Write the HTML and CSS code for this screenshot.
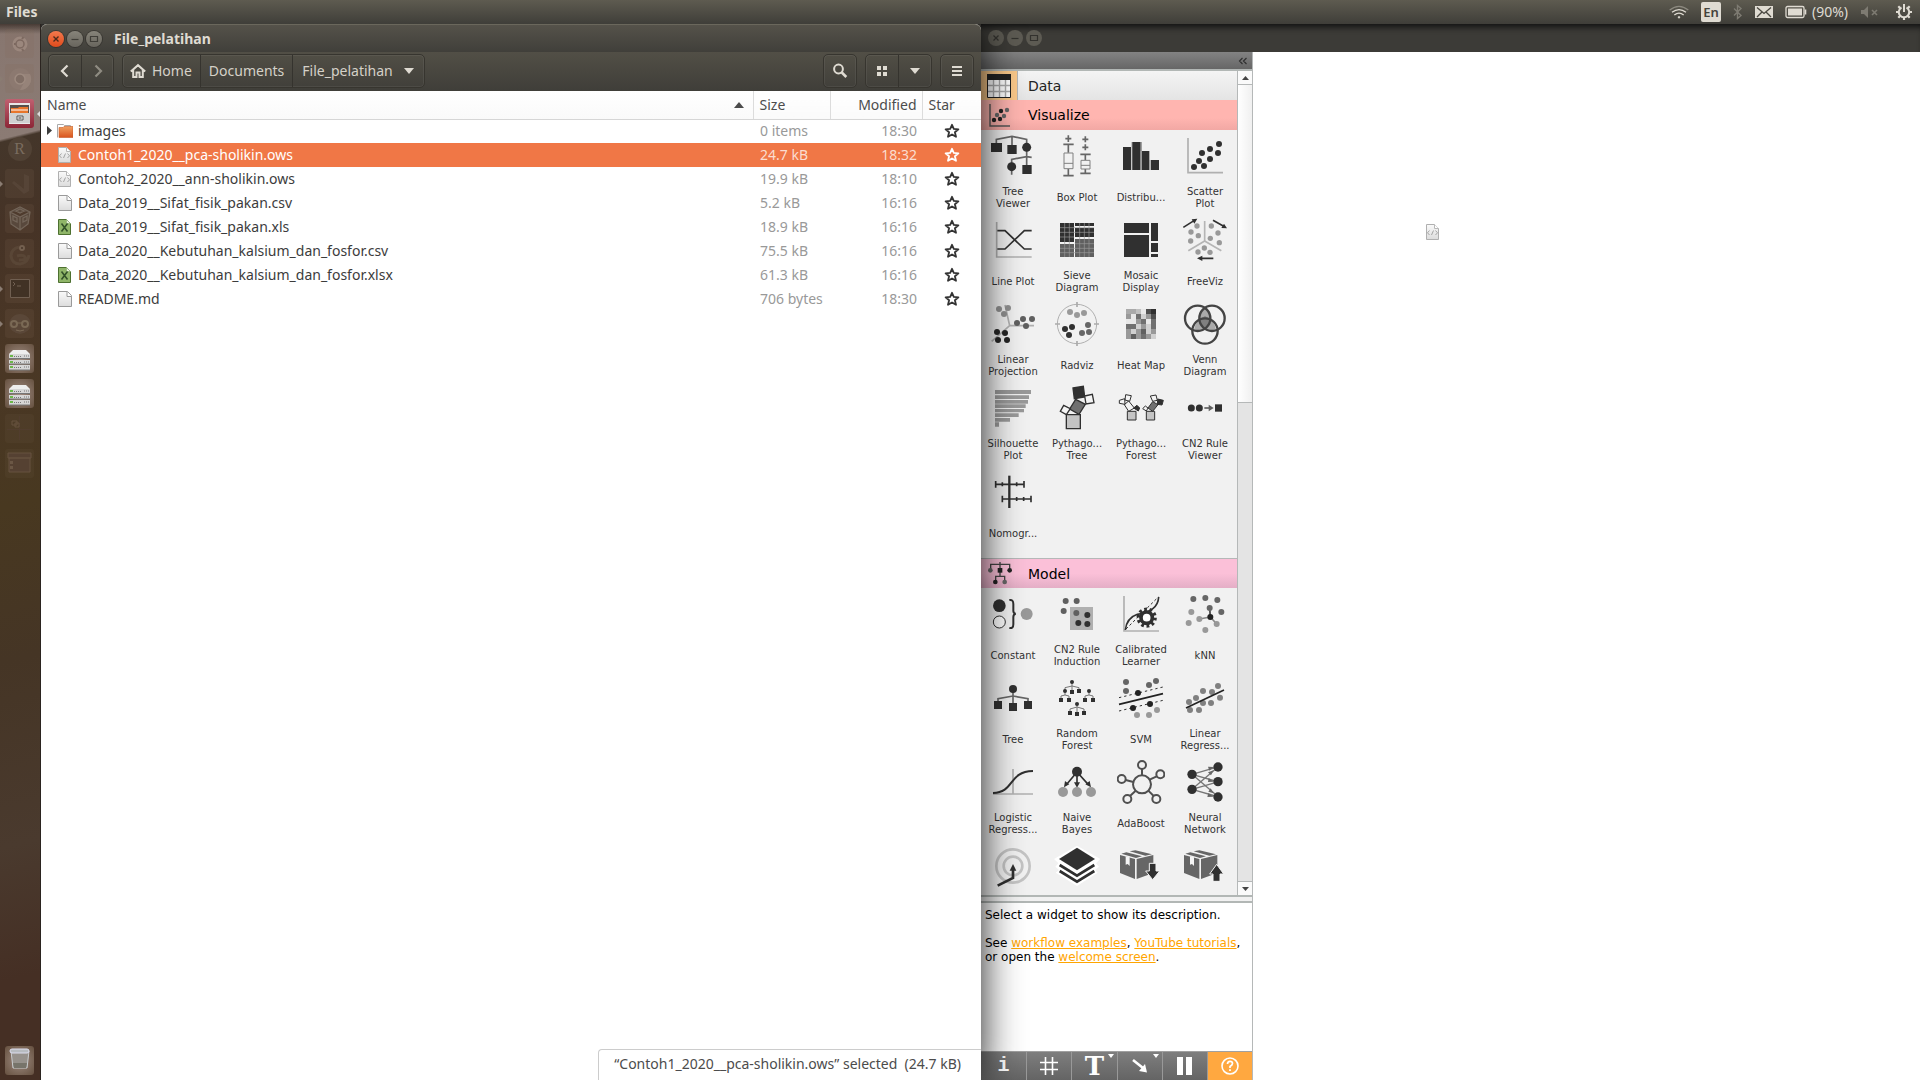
FILE: index.html
```html
<!DOCTYPE html>
<html lang="en">
<head>
<meta charset="utf-8">
<title>File_pelatihan</title>
<link rel="stylesheet" href="styles.css">
</head>
<body>
<svg class="defs" width="0" height="0" aria-hidden="true">
  <linearGradient id="paper" x1="0" y1="0" x2="0" y2="1"><stop offset="0" stop-color="#fafafa"/><stop offset="1" stop-color="#dcdcdc"/></linearGradient>
  <linearGradient id="orange" x1="0" y1="0" x2="0" y2="1"><stop offset="0" stop-color="#f0a060"/><stop offset="1" stop-color="#d9541e"/></linearGradient>
  <symbol id="star" viewBox="0 0 16 16"><path d="M8 1.8l1.8 4.1 4.6.4-3.5 3 1.1 4.5L8 11.4l-4 2.4 1.1-4.5-3.5-3 4.6-.4z" fill="none" stroke="currentColor" stroke-width="1.8" stroke-linejoin="round"/></symbol>
  <symbol id="doc" viewBox="0 0 16 16"><path d="M1.5.5h9l4 4v11h-13z" fill="url(#paper)" stroke="#9a9a9a"/><path d="M10 .5v5h4.5" fill="#fff" stroke="#9a9a9a"/></symbol>
  <symbol id="code" viewBox="0 0 16 16"><path d="M1.5.5h8l4 4v11h-12z" fill="url(#paper)" stroke="#b0b0b0"/><path d="M9.5.5v4h4" fill="#fff" stroke="#b8b8b8"/><path d="M4.500 6.500L2.500 8.800l2 2.200M10.500 6.500l2 2.300-2 2.200M8.500 6.500l-2 4.500" fill="none" stroke="#a4a4a4"/></symbol>
  <symbol id="sheet" viewBox="0 0 16 16"><path d="M1.5.5h8l4 4v11h-12z" fill="#8fb568" stroke="#4d7030"/><path d="M9.5.5v4h4" fill="#e8f2dc" stroke="#9dbb80"/><path d="M4.5 4.5l6 8M10.5 4.5l-6 8" stroke="#33522a" stroke-width="1.6"/></symbol>
  <symbol id="folder" viewBox="0 0 16 16"><path d="M.5 14.5V1.5h6l1 1h6v3" fill="#fff" stroke="#aaa"/><path d="M2 4.5h4l1-1h9v11H2z" fill="url(#orange)" stroke="#c65a28" stroke-width=".6"/></symbol>
  <symbol id="server" viewBox="0 0 29 29"><path d="M8 6h13l4 4H4z" fill="#eee"/><path d="M4 10h21v5H4zM4 16h21v4H4zM4 21h21v5H4z" fill="#d6d6d6"/><path d="M4 14.5h21M4 20h21M4 26h21" stroke="#777"/><path d="M5 12h3M5 18h3M5 23h3" stroke="#6cb84a" stroke-width="2"/><path d="M9 12.5h7M9 18.5h7M9 23.5h7M19 12h5M19 18h5M19 23h5" stroke="#777" stroke-dasharray="1 1"/></symbol>
</svg>

<header class="panel">
  <span class="panel-app">Files</span>
  <div class="tray">
    <svg width="20" height="16" viewBox="87 12 60 48" fill="none" stroke="#dfdbd2" stroke-width="4"><path d="M89 30q28-22 56 0" stroke="#8c897f"/><path d="M96 37q21-16 42 0M103 45q14-11 28 0"/><circle cx="117" cy="52" r="3" fill="#dfdbd2" stroke-width="1"/></svg>
    <span class="lang">En</span>
    <svg width="10" height="16" viewBox="0 0 10 16" fill="none" stroke="#7e7b72" stroke-width="1.4"><path d="M1 4.5l7 7-3.5 3V1.5L8 4.5l-7 7"/></svg>
    <svg width="18" height="14" viewBox="0 0 18 14"><path d="M0 1h18v12H0z" fill="#dfdbd2"/><path d="M2 2.5l7 6 7-6M2 12l5-5M16 12l-5-5" fill="none" stroke="#48463f" stroke-width="1.3"/></svg>
    <span class="battery"><svg width="22" height="14" viewBox="0 0 22 14"><rect x="1" y="1.5" width="18" height="11" rx="1.5" fill="none" stroke="#dfdbd2" stroke-width="1.3"/><path d="M3 3.5h14v7H3z" fill="#dfdbd2"/><path d="M20.5 4.5v5" stroke="#dfdbd2" stroke-width="1.6"/></svg><span>(90%)</span></span>
    <svg width="24" height="14" viewBox="0 0 24 14"><path d="M1 5h3l4-4v12L4 9H1z" fill="#7e7b72"/><path d="M12 5l5 5M17 5l-5 5" stroke="#7e7b72" stroke-width="1.6"/></svg>
    <svg width="16" height="16" viewBox="0 0 16 16" fill="none" stroke="#dfdbd2"><path d="M5.5 3.5a5.2 5.2 0 1 0 5 0" stroke-width="2"/><path d="M8 0v8" stroke-width="2"/><path d="M8 13.5V16M2.5 8H0M13.5 8H16M4 12l-1.7 1.7M12 12l1.7 1.7M4 4L2.3 2.3M12 4l1.7-1.7" stroke-width="2.2"/></svg>
  </div>
</header>

<main class="desktop">
  <nav class="launcher" aria-label="Launcher">
    <button class="tile dim" aria-label="Search"><svg viewBox="0 0 29 29" fill="none" stroke="#b09a90"><circle cx="15" cy="15" r="7.5" fill="#a08c82" stroke="none"/><circle cx="15" cy="15" r="4" stroke="#7b675e" stroke-width="1.5"/><path d="M9 15h2M17 10l1.5-2M17 20l1.5 2" stroke="#7b675e" stroke-width="2"/></svg></button>
    <button class="tile dim run" aria-label="Chrome"><svg viewBox="0 0 29 29"><circle cx="15" cy="15" r="11" fill="#8d7a71"/><path d="M15 10h10a11 11 0 0 1-10 16l5-9z" fill="#9a877d"/><circle cx="15" cy="15" r="5" fill="#7f6d64" stroke="#a39085" stroke-width="1.5"/></svg></button>
    <button class="tile active run" aria-label="Files"><svg viewBox="0 0 29 29"><path d="M4 4h21v21H4z" fill="#e8e8e8"/><path d="M5 6h19v8H5z" fill="#58504c"/><path d="M6 9h7l1-1h9v6H6z" fill="#e8762c"/><path d="M6 11h17" stroke="#fff"/><path d="M4 14h21v10H4z" fill="#d0d0d0"/><path d="M12 17h6v4h-6z" fill="#eee" stroke="#555"/><path d="M13.5 19h3" stroke="#333"/></svg></button>
    <button class="tile bare dim" aria-label="R"><span class="r-badge">R</span></button>
    <button class="tile dim run" aria-label="Code"><svg viewBox="0 0 29 29"><path d="M19 5l5 2v15l-5 3L7 14l2-2 10 8z" fill="#59473a"/></svg></button>
    <button class="tile dim" aria-label="VirtualBox"><svg viewBox="0 0 29 29" fill="#5b4c40" stroke="#7d7064" stroke-width="1.3"><path d="M5 8l10-5 10 5-2 12-8 6-9-6zM5 8l10 5 10-5M15 13v13M8 12l4 2v4l-4-2zM18 14l4-2v4l-4 2zM11 7l4-2 4 2-4 2z"/></svg></button>
    <button class="tile dim" aria-label="Gecko"><svg viewBox="0 0 29 29"><path d="M14 8q-8 2-8 9 1 8 9 8 8-1 9-9M12 17q6-2 8 1t-6 3" fill="none" stroke="#5c4939" stroke-width="3"/><circle cx="17" cy="9" r="3" fill="#7c6958"/><circle cx="17" cy="9" r="1" fill="#443326"/></svg></button>
    <button class="tile dim run" aria-label="Terminal"><svg viewBox="0 0 29 29" fill="none" stroke="#78685a"><path d="M5.5 5.5h19v18h-19z" fill="#3e3024"/><path d="M8 8l2 2-2 2M12 12h4"/></svg></button>
    <button class="tile dim run" aria-label="Orange"><svg viewBox="0 0 29 29"><path d="M4 16a11 11 0 0 1 22 0q-2 8-11 9Q6 24 4 16z" fill="#5d4a3b"/><circle cx="9" cy="15" r="3" fill="none" stroke="#85745f" stroke-width="2"/><circle cx="20" cy="15" r="3" fill="none" stroke="#85745f" stroke-width="2"/><path d="M11 21q4 2 8 0M12 14h5" stroke="#85745f" fill="none"/></svg></button>
    <button class="tile lit" aria-label="Server 1"><svg viewBox="0 0 29 29"><use href="#server"/></svg></button>
    <button class="tile lit" aria-label="Server 2"><svg viewBox="0 0 29 29"><use href="#server"/></svg></button>
    <button class="tile faint" aria-label="Workspaces"><svg viewBox="0 0 29 29" fill="none" stroke="#67523f"><path d="M14.5 2v24M2 15.5h24" stroke="#513d2e"/><path d="M7 7h5v4H7zM10 9h4v4h-4z"/></svg></button>
    <button class="tile faint" aria-label="Archive"><svg viewBox="0 0 29 29"><path d="M3 4h23v5H3zM4 9h21v14H4z" fill="#554132" stroke="#67523f"/><path d="M5 12h3v3H5zM5 17h3v3H5z" fill="#6b5745"/></svg></button>
    <button class="tile lit trash" aria-label="Trash"><svg viewBox="0 0 29 29"><path d="M6 5h18l-2 17H8z" fill="#97928c" stroke="#c8ccce"/><path d="M8 17h14l-1 5H9z" fill="#77746a"/><rect x="5" y="3" width="19" height="4" rx="2" fill="#b8bcc0" stroke="#dde"/></svg></button>
  </nav>

  <section class="files">
    <div class="titlebar">
      <button class="ctl close" aria-label="Close"><svg viewBox="0 0 16 16"><path d="M5.5 5.5l5 5M10.5 5.5l-5 5" stroke="#4b2a1c" stroke-width="1.4"/></svg></button>
      <button class="ctl" aria-label="Minimize"><svg viewBox="0 0 16 16"><path d="M4.5 8.5h7" stroke="#403e38" stroke-width="1.2"/></svg></button>
      <button class="ctl" aria-label="Maximize"><svg viewBox="0 0 16 16"><path d="M4.5 5.5h7v5h-7z" fill="none" stroke="#403e38" stroke-width="1.2"/></svg></button>
      <h1>File_pelatihan</h1>
    </div>
    <div class="toolbar">
      <div class="group nav">
        <button aria-label="Back"><svg width="16" height="16" viewBox="0 0 16 16"><path d="M10.5 2.5L5 8l5.5 5.5" fill="none" stroke="#dfdbd2" stroke-width="2.2"/></svg></button>
        <button aria-label="Forward"><svg width="16" height="16" viewBox="0 0 16 16"><path d="M5.5 2.5L11 8l-5.5 5.5" fill="none" stroke="#8f8c82" stroke-width="2.2"/></svg></button>
      </div>
      <div class="group path">
        <button class="home"><svg width="16" height="16" viewBox="0 0 16 16"><path d="M.8 8.5L8 2.2l7.2 6.3M3.2 7v7h3.3V9.5h3V14h3.3V7" fill="none" stroke="#dfdbd2" stroke-width="2"/></svg>Home</button>
        <button class="docs">Documents</button>
        <button class="here">File_pelatihan<svg width="10" height="6" viewBox="0 0 10 6"><path d="M0 0h10L5 6z" fill="#dfdbd2"/></svg></button>
      </div>
      <span class="spacer"></span>
      <div class="group"><button aria-label="Search"><svg width="16" height="16" viewBox="0 0 16 16" fill="none" stroke="#dfdbd2"><circle cx="6.500" cy="6" r="4.400" stroke-width="2"/><path d="M9.800 9.500l4.500 4.500" stroke-width="2.600"/></svg></button></div>
      <div class="group"><button aria-label="Grid view"><svg width="16" height="16" viewBox="0 0 16 16"><path d="M3 3h4v4H3zM9 3h4v4H9zM3 9h4v4H3zM9 9h4v4H9z" fill="#dfdbd2"/></svg></button><button aria-label="View options"><svg width="10" height="6" viewBox="0 0 10 6"><path d="M0 0h10L5 6z" fill="#dfdbd2"/></svg></button></div>
      <div class="group"><button aria-label="Menu"><svg width="16" height="16" viewBox="0 0 16 16"><path d="M3 4h10M3 8h10M3 12h10" stroke="#dfdbd2" stroke-width="2"/></svg></button></div>
    </div>
    <table class="list">
      <colgroup><col><col class="c-size"><col class="c-mod"><col class="c-star"></colgroup>
      <thead><tr><th><span class="sort">Name<svg width="10" height="6" viewBox="0 0 10 6"><path d="M0 6h10L5 0z" fill="#4c4c4c"/></svg></span></th><th>Size</th><th class="mod">Modified</th><th>Star</th></tr></thead>
      <tbody>
        <tr><td><span class="file"><svg class="exp" viewBox="0 0 11 16"><path d="M1 3v9l5-4.5z" fill="#3c3c3c"/></svg><svg class="ico"><use href="#folder"/></svg>images</span></td><td>0 items</td><td class="mod">18:30</td><td class="st"><button aria-label="Star"><svg><use href="#star"/></svg></button></td></tr>
        <tr class="selected"><td><span class="file"><span class="exp"></span><svg class="ico"><use href="#code"/></svg>Contoh1_2020__pca-sholikin.ows</span></td><td>24.7 kB</td><td class="mod">18:32</td><td class="st"><button aria-label="Star"><svg><use href="#star"/></svg></button></td></tr>
        <tr><td><span class="file"><span class="exp"></span><svg class="ico"><use href="#code"/></svg>Contoh2_2020__ann-sholikin.ows</span></td><td>19.9 kB</td><td class="mod">18:10</td><td class="st"><button aria-label="Star"><svg><use href="#star"/></svg></button></td></tr>
        <tr><td><span class="file"><span class="exp"></span><svg class="ico"><use href="#doc"/></svg>Data_2019__Sifat_fisik_pakan.csv</span></td><td>5.2 kB</td><td class="mod">16:16</td><td class="st"><button aria-label="Star"><svg><use href="#star"/></svg></button></td></tr>
        <tr><td><span class="file"><span class="exp"></span><svg class="ico"><use href="#sheet"/></svg>Data_2019__Sifat_fisik_pakan.xls</span></td><td>18.9 kB</td><td class="mod">16:16</td><td class="st"><button aria-label="Star"><svg><use href="#star"/></svg></button></td></tr>
        <tr><td><span class="file"><span class="exp"></span><svg class="ico"><use href="#doc"/></svg>Data_2020__Kebutuhan_kalsium_dan_fosfor.csv</span></td><td>75.5 kB</td><td class="mod">16:16</td><td class="st"><button aria-label="Star"><svg><use href="#star"/></svg></button></td></tr>
        <tr><td><span class="file"><span class="exp"></span><svg class="ico"><use href="#sheet"/></svg>Data_2020__Kebutuhan_kalsium_dan_fosfor.xlsx</span></td><td>61.3 kB</td><td class="mod">16:16</td><td class="st"><button aria-label="Star"><svg><use href="#star"/></svg></button></td></tr>
        <tr><td><span class="file"><span class="exp"></span><svg class="ico"><use href="#doc"/></svg>README.md</span></td><td>706 bytes</td><td class="mod">18:30</td><td class="st"><button aria-label="Star"><svg><use href="#star"/></svg></button></td></tr>
      </tbody>
    </table>
    <p class="status">“Contoh1_2020__pca-sholikin.ows” selected&nbsp; (24.7 kB)</p>
  </section>

  <section class="orange">
    <div class="titlebar back">
      <button class="ctl" aria-label="Close"><svg viewBox="0 0 16 16"><path d="M5.5 5.5l5 5M10.5 5.5l-5 5" stroke="#33322e" stroke-width="1.2"/></svg></button>
      <button class="ctl" aria-label="Minimize"><svg viewBox="0 0 16 16"><path d="M4.5 8.5h7" stroke="#33322e" stroke-width="1.2"/></svg></button>
      <button class="ctl" aria-label="Maximize"><svg viewBox="0 0 16 16"><path d="M4.5 5.5h7v5h-7z" fill="none" stroke="#33322e" stroke-width="1.2"/></svg></button>
    </div>
    <div class="work">
      <aside class="dock">
        <div class="dock-head"><button aria-label="Collapse"><svg width="10" height="8" viewBox="0 0 10 8"><path d="M4.5 1l-3 3 3 3M8.5 1l-3 3 3 3" fill="none" stroke="#303030" stroke-width="1.2"/></svg></button></div>
        <div class="toolbox">
          <div class="tabs">
            <button class="tab data"><span class="tab-ico"><svg width="24" height="24" viewBox="0 0 24 24"><path d="M.5.5h23v23H.5z" fill="#fff" stroke="#222"/><path d="M0 0h24v6H0z" fill="#222"/><path d="M1 11.5h22M1 17.5h22M6.5 6v17M12.5 6v17M18.5 6v17" stroke="#aaa" stroke-width="1.4"/></svg></span>Data</button>
            <button class="tab visualize"><span class="tab-ico"><svg width="24" height="24" viewBox="0 0 24 24"><path d="M2 1v22h20" fill="none" stroke="#555" stroke-width="1.4"/><g fill="#222"><circle cx="6" cy="17" r="2.2"/><circle cx="12" cy="16" r="2.2"/><circle cx="13" cy="8" r="2.2"/></g><g fill="#666"><circle cx="9" cy="12" r="2.2"/><circle cx="16" cy="13" r="2.2"/><circle cx="19" cy="7" r="2.2"/></g></svg></span>Visualize</button>
            <div class="widgets first">
              <button class="w"><svg viewBox="42 36 144 144"><path d="M64 80V58l47-9 44 9v22M111 49v34M155 82v66M110 140v24M110 138v-20l45-8 15 2" fill="none" stroke="#666" stroke-width="5"/><g fill="#303030"><path d="M48 69h33v27H48zM97 75h28v27H97zM142 135h28v27h-28z"/><circle cx="155" cy="82" r="13.5"/><circle cx="110" cy="140" r="13.5"/></g></svg><span>Tree Viewer</span></button>
              <button class="w"><svg viewBox="234 36 144 144"><g fill="none" stroke="#666" stroke-width="5"><path d="M280 46v20M271 56h18M331 49v18M322 58h18M331 73v18M322 82h18M265 73h31M280 73v25M265 167h31M280 147v20M316 103h31M331 103v17M316 160h31M331 147v13"/></g><g fill="none" stroke="#808080" stroke-width="3"><path d="M267 99h27v47h-27zM318 121h27v26h-27zM267 130h27M318 136h27"/></g></svg><span>Box Plot</span></button>
              <button class="w"><svg viewBox="426 36 144 144"><path d="M470 66h30v84h-30z" fill="#777"/><path d="M444 81h24v69h-24zM473 66h22v84h-22zM501 93h22v57h-22zM528 120h24v30h-24z" fill="#303030"/><path d="M498 93v57M525 120v30" stroke="#999" stroke-width="4"/></svg><span>Distribu...</span></button>
              <button class="w"><svg viewBox="618 36 144 144"><path d="M639 54v104h105" fill="none" stroke="#b0b0b0" stroke-width="5"/><g fill="#303030"><circle cx="732" cy="72" r="9"/><circle cx="705" cy="87" r="9"/><circle cx="681" cy="99" r="9"/><circle cx="729" cy="99" r="9"/><circle cx="705" cy="117" r="9"/><circle cx="672" cy="123" r="9"/><circle cx="657" cy="141" r="9"/><circle cx="687" cy="138" r="9"/></g></svg><span>Scatter Plot</span></button>

              <button class="w"><svg viewBox="42 288 144 144"><path d="M65 306v105h105" fill="none" stroke="#b0b0b0" stroke-width="5"/><path d="M67 332h23l58 55h22M67 387h23l58-55h22" fill="none" stroke="#303030" stroke-width="5"/></svg><span>Line Plot</span></button>
              <button class="w"><svg viewBox="234 288 144 144"><path d="M255 309h42v57h-42zM300 309h57v9h-57zM300 324h57v27h-57z" fill="#303030"/><path d="M255 372h42v39h-42zM300 357h57v54h-57z" fill="#606060"/><path d="M269 309v102M283 309v102M314 309v102M328 309v102M342 309v102M255 323h102M255 337h102M255 351h42M255 385h102M255 398h102M300 371h57" stroke="#999" stroke-width="2"/></svg><span>Sieve Diagram</span></button>
              <button class="w"><svg viewBox="426 288 144 144"><path d="M447 309h75v30h-75zM447 345h75v66h-75zM528 309h21v54h-21zM528 369h21v27h-21zM528 402h21v9h-21z" fill="#303030"/></svg><span>Mosaic Display</span></button>
              <button class="w"><svg viewBox="618 288 144 144"><path d="M689 303v60M640 392l49-29 50 29" fill="none" stroke="#b5b5b5" stroke-width="5"/><g fill="#999"><circle cx="666" cy="318" r="8"/><circle cx="648" cy="336" r="8"/><circle cx="670" cy="347" r="8"/><circle cx="647" cy="363" r="8"/><circle cx="709" cy="318" r="8"/><circle cx="729" cy="339" r="8"/><circle cx="706" cy="355" r="8"/><circle cx="733" cy="368" r="8"/><circle cx="688" cy="384" r="8"/><circle cx="669" cy="396" r="8"/><circle cx="705" cy="397" r="8"/></g><path d="M625 322l32-20M714 301l32 18M715 415h-36" stroke="#303030" stroke-width="5"/><path d="M667 296l-17 2 8 13zM756 325l-9-14-8 13zM666 415l16-8v16z" fill="#303030"/></svg><span>FreeViz</span></button>

              <button class="w"><svg viewBox="42 0 144 144"><path d="M90 15l14 62h73M104 77l-54 47" fill="none" stroke="#b0b0b0" stroke-width="5"/><g fill="#909090"><circle cx="72" cy="27" r="9"/><circle cx="99" cy="24" r="9"/><circle cx="87" cy="42" r="9"/></g><g fill="#606060"><circle cx="144" cy="57" r="9"/><circle cx="171" cy="57" r="9"/><circle cx="126" cy="69" r="9"/><circle cx="153" cy="78" r="9"/></g><g fill="#252525"><circle cx="66" cy="96" r="9"/><circle cx="90" cy="99" r="9"/><circle cx="69" cy="120" r="9"/><circle cx="96" cy="120" r="9"/></g></svg><span>Linear Projection</span></button>
              <button class="w"><svg viewBox="234 0 144 144"><circle cx="306" cy="72" r="59" fill="none" stroke="#b0b0b0" stroke-width="3"/><path d="M306 6v15M306 123v15M240 72h15M357 72h15" stroke="#aaa" stroke-width="5"/><g fill="#999"><circle cx="285" cy="36" r="9"/><circle cx="306" cy="45" r="9"/><circle cx="327" cy="39" r="9"/></g><g fill="#666"><circle cx="339" cy="75" r="9"/><circle cx="321" cy="99" r="9"/><circle cx="342" cy="96" r="9"/></g><g fill="#303030"><circle cx="291" cy="81" r="9"/><circle cx="270" cy="87" r="9"/><circle cx="282" cy="105" r="9"/></g></svg><span>Radviz</span></button>
              <button class="w"><svg viewBox="426 0 144 144" shape-rendering="crispEdges"><path d="M453 27h90v90h-90z" fill="#999"/><path d="M453 27h30v15h-30z" fill="#aaa"/><path d="M483 27h15v15h-15z" fill="#c0c0c0"/><path d="M498 27h15v15h-15zM468 42h15v30h-15zM513 57h15v15h-15zM453 57h15v15h-15z" fill="#e8e8e8"/><path d="M513 27h15v15h-15zM528 42h15v15h-15z" fill="#505050"/><path d="M528 27h15v15h-15z" fill="#303030"/><path d="M483 42h15v15h-15zM498 57h15v15h-15zM528 57h15v30h-15zM453 72h30v15h-30zM498 102h15v15h-15z" fill="#707070"/><path d="M498 42h15v15h-15zM483 72h15v15h-15zM513 72h15v15h-15zM468 87h15v15h-15zM513 87h15v15h-15zM528 102h15v15h-15z" fill="#d0d0d0"/><path d="M468 102h15v15h-15zM498 87h15v15h-15z" fill="#606060"/></svg><span>Heat Map</span></button>
              <button class="w"><svg viewBox="618 0 144 144"><path d="M690 25q16 12 16 31l-3 5q16 4 20 28-18 6-33-4-14 10-33 4 3-22 20-28l-3-5q0-20 16-31z" fill="#aaa"/><path d="M690 48l16 10q0 16-16 26-16-10-16-26z" fill="#808080"/><g fill="none" stroke="#444" stroke-width="7"><circle cx="668" cy="55" r="38"/><circle cx="711" cy="55" r="38"/><circle cx="690" cy="93" r="38"/></g></svg><span>Venn Diagram</span></button>

              <button class="w"><svg viewBox="42 252 144 144"><path d="M60 270h108v12H60zM60 286h102v11H60zM60 300h99v11H60zM60 313h92v11H60zM60 327h87v10H60zM60 340h71v11H60zM60 354h45v11H60zM60 367h12v13H60z" fill="#999"/></svg><span>Silhouette Plot</span></button>
              <button class="w"><svg viewBox="234 252 144 144"><g stroke="#303030" stroke-width="4"><path d="M274 344h42v42h-42z" fill="#c4c4c4"/><path d="M302 298l29 15-19 30-28-16z" fill="#707070"/><path d="M294 264l31-5 4 32-31 5z" fill="#303030"/><path d="M329 288l23-5 5 25-24 4zM266 316l20 10-12 18-18-10z" fill="#f4f4f4"/></g></svg><span>Pythago... Tree</span></button>
              <button class="w"><svg viewBox="426 252 144 144"><g stroke="#303030" stroke-width="3" fill="#f4f4f4"><path d="M457 334h26v26h-26zM514 334h25v26h-25z" fill="#c4c4c4"/><path d="M461 303l17 21-17 10-13-20zM433 301l16-5 1 17-17-3zM452 284l17 3-5 17-14-4z"/><path d="M476 324l10-8 8 8-4 9z" fill="#303030"/><path d="M533 305l16 9-16 20-14-10z" fill="#707070"/><path d="M548 297l17 4-4 14-14-2z" fill="#303030"/><path d="M526 288l17-3 4 16-14 3zM503 326l8-8 8 6-5 9z"/></g></svg><span>Pythago... Forest</span></button>
              <button class="w"><svg viewBox="618 252 144 144"><g fill="#303030"><circle cx="649" cy="324" r="10.5"/><circle cx="673" cy="324" r="10.5"/><path d="M720 313h21v22h-21z"/></g><path d="M688 324h16" stroke="#606060" stroke-width="5"/><path d="M716 324l-15-10v20z" fill="#606060"/></svg><span>CN2 Rule Viewer</span></button>

              <button class="w"><svg viewBox="42 504 144 144"><path d="M103 527v97" stroke="#303030" stroke-width="7"/><path d="M61 553h86M81 597h87M62 543v20M147 543v20M82 547v12M125 547v12M82 587v20M168 587v20M125 591v12M146 591v12" stroke="#303030" stroke-width="5"/></svg><span>Nomogr...</span></button>
            </div>
            <button class="tab model"><span class="tab-ico"><svg width="26" height="26" viewBox="36 33 78 78"><path d="M47 60V43h57v17M75 36v30M62 96V79h27v17M75 66v13" fill="none" stroke="#444" stroke-width="4"/><g fill="#222"><path d="M68 54h14v14H68z"/><circle cx="104" cy="61" r="7"/><circle cx="61" cy="96" r="7"/></g><g fill="#666"><circle cx="46" cy="61" r="7"/><circle cx="89" cy="96" r="7"/></g></svg></span>Model</button>
            <div class="widgets">
              <button class="w"><svg viewBox="42 120 144 144"><circle cx="73" cy="167" r="19" fill="#303030"/><circle cx="73" cy="216" r="18" fill="#fff" stroke="#303030" stroke-width="3"/><path d="M103 150q12-2 12 12v20q0 8 7 9-7 2-7 10v22q0 13-12 11" fill="none" stroke="#303030" stroke-width="6"/><circle cx="155" cy="192" r="18" fill="#999"/></svg><span>Constant</span></button>
              <button class="w"><svg viewBox="234 120 144 144"><path d="M285 171h69v69h-69z" fill="#b0b0b0"/><g fill="#606060"><circle cx="272" cy="153" r="9"/><circle cx="305" cy="153" r="9"/><circle cx="266" cy="183" r="9"/><circle cx="304" cy="189" r="9"/></g><g fill="#303030"><circle cx="337" cy="195" r="9"/><circle cx="310" cy="219" r="9"/><circle cx="337" cy="222" r="9"/></g></svg><span>CN2 Rule Induction</span></button>
              <button class="w"><svg viewBox="426 120 144 144"><path d="M447 138v105h105" fill="none" stroke="#b0b0b0" stroke-width="5"/><path d="M453 237l97-96" stroke="#303030" stroke-width="3" stroke-dasharray="8 7"/><path d="M451 240q4-36 36-47 62-9 64-52" fill="none" stroke="#303030" stroke-width="5"/><circle cx="515" cy="203" r="25" fill="none" stroke="#303030" stroke-width="11" stroke-dasharray="8 7.7"/><circle cx="515" cy="203" r="17" fill="#fff" stroke="#303030" stroke-width="11"/></svg><span>Calibrated Learner</span></button>
              <button class="w"><svg viewBox="618 120 144 144"><path d="M704 174l2 27 19 21M706 201l-33 6" fill="none" stroke="#888" stroke-width="5"/><path d="M704 174l2 27" stroke="#505050" stroke-width="5"/><g fill="#666"><circle cx="655" cy="147" r="9"/><circle cx="691" cy="144" r="9"/><circle cx="727" cy="150" r="9"/><circle cx="739" cy="186" r="9"/><circle cx="704" cy="174" r="9"/></g><g fill="#999"><circle cx="649" cy="186" r="9"/><circle cx="641" cy="219" r="9"/><circle cx="673" cy="207" r="9"/><circle cx="725" cy="222" r="9"/><circle cx="691" cy="240" r="9"/></g><circle cx="706" cy="201" r="9" fill="#222"/></svg><span>kNN</span></button>

              <button class="w"><svg viewBox="42 372 144 144"><path d="M69 458v-12l45-8 45 8v12M114 417v48" fill="none" stroke="#666" stroke-width="5"/><g fill="#303030"><circle cx="114" cy="417" r="12"/><path d="M57 453h24v24H57zM102 459h24v24h-24zM147 453h24v24h-24z"/></g></svg><span>Tree</span></button>
              <button class="w"><svg viewBox="234 372 144 144"><path d="M270 423v-10l21-5 21 5v10M291 396v30M258 450v-12l12-3 12 3v12M270 423v12M330 450v-12l12-3 12 3v12M342 423v12M285 489v-12l21-6 21 6v12M306 462v30" fill="none" stroke="#777" stroke-width="3"/><g fill="#303030"><circle cx="291" cy="396" r="6"/><circle cx="270" cy="423" r="6"/><circle cx="342" cy="423" r="6"/><circle cx="306" cy="462" r="6"/><path d="M285 420h12v12h-12zM306 417h12v12h-12zM252 444h12v12h-12zM276 444h12v12h-12zM324 444h12v12h-12zM348 444h12v12h-12zM279 483h12v12h-12zM300 486h12v12h-12zM321 483h12v12h-12z"/></g></svg><span>Random Forest</span></button>
              <button class="w"><svg viewBox="426 372 144 144"><path d="M432 463l132-32" stroke="#222" stroke-width="5"/><path d="M432 443l132-32M432 483l132-32" stroke="#303030" stroke-width="3" stroke-dasharray="7 9"/><g fill="#666"><circle cx="453" cy="396" r="9"/><circle cx="453" cy="423" r="9"/><circle cx="522" cy="405" r="9"/><circle cx="543" cy="393" r="9"/></g><g fill="#222"><circle cx="489" cy="429" r="9"/><circle cx="525" cy="462" r="9"/><circle cx="474" cy="474" r="9"/></g><g fill="#999"><circle cx="486" cy="495" r="9"/><circle cx="522" cy="495" r="9"/><circle cx="546" cy="480" r="9"/></g></svg><span>SVM</span></button>
              <button class="w"><svg viewBox="618 372 144 144"><g fill="#808080"><circle cx="729" cy="408" r="9"/><circle cx="684" cy="423" r="9"/><circle cx="711" cy="426" r="9"/><circle cx="663" cy="444" r="9"/><circle cx="735" cy="443" r="9"/><circle cx="642" cy="456" r="9"/><circle cx="684" cy="459" r="9"/><circle cx="708" cy="459" r="9"/><circle cx="645" cy="480" r="9"/><circle cx="672" cy="480" r="9"/></g><path d="M633 474l114-54" stroke="#222" stroke-width="5"/></svg><span>Linear Regress...</span></button>

              <button class="w"><svg viewBox="42 54 144 144"><path d="M114 87v74M54 162h120" stroke="#b0b0b0" stroke-width="5"/><path d="M54 159c66-2 44-64 120-66" fill="none" stroke="#303030" stroke-width="6"/></svg><span>Logistic Regress...</span></button>
              <button class="w"><svg viewBox="234 54 144 144"><path d="M306 96l-32 38M306 96v36M306 96l34 38" stroke="#303030" stroke-width="5"/><path d="M267 142l3-19 13 10zM306 143l-9-16h18zM348 142l-4-19-13 10z" fill="#303030"/><circle cx="306" cy="95" r="15" fill="#303030"/><g fill="#999"><circle cx="264" cy="156" r="15"/><circle cx="306" cy="156" r="15"/><circle cx="348" cy="156" r="15"/></g></svg><span>Naive Bayes</span></button>
              <button class="w"><svg viewBox="426 54 144 144"><g fill="none" stroke="#505050" stroke-width="6"><circle cx="501" cy="133" r="27"/><circle cx="501" cy="75" r="12"/><circle cx="440" cy="117" r="12"/><circle cx="556" cy="103" r="12"/><circle cx="457" cy="177" r="12"/><circle cx="544" cy="177" r="12"/><path d="M501 87v19M452 120l23 6M545 109l-21 10M465 168l17-16M536 168l-16-16"/></g></svg><span>AdaBoost</span></button>
              <button class="w"><svg viewBox="618 54 144 144"><path d="M651 103l70-20M651 103l70 20M651 103l70 60M651 148l70-60M651 148l70-20M651 148l70 20" stroke="#777" stroke-width="4"/><path d="M716 81l-17-1 4 12zM716 125l-15-11-2 12zM716 91l-17 6 9 9zM716 170l-16-11-3 12zM716 160l-9-15-7 10z" fill="#666"/><g fill="#303030"><circle cx="651" cy="103" r="14"/><circle cx="651" cy="148" r="14"/><circle cx="729" cy="81" r="14"/><circle cx="729" cy="125" r="14"/><circle cx="729" cy="171" r="14"/></g></svg><span>Neural Network</span></button>

              <button class="w" aria-label="Stochastic Gradient Descent"><svg viewBox="42 306 144 144"><g fill="none" stroke="#c4c4c4" stroke-width="8"><circle cx="114" cy="378" r="50"/><circle cx="114" cy="378" r="28"/></g><path d="M68 437l46-23v-28" fill="none" stroke="#303030" stroke-width="8"/><path d="M114 372l-10 20h20z" fill="#303030"/></svg></button>
              <button class="w" aria-label="Stacking"><svg viewBox="234 306 144 144"><path d="M306 317l70 40-13 13 9 10-12 10 8 8-62 40-64-40 10-8-11-10 9-10-13-13z" fill="#fff"/><path d="M306 323l54 34-54 34-54-34z" fill="#303030"/><path d="M254 375l52 32 52-32M254 393l52 32 52-32" fill="none" stroke="#303030" stroke-width="8"/></svg></button>
              <button class="w" aria-label="Save Model"><svg viewBox="426 306 144 144"><path d="M435 345l45 12v60l-45-18zM485 357l50-12v54l-50 18z" fill="#666"/><path d="M439 341l15-4 47 12-18 5zM464 334l17-3 50 12-20 4z" fill="#666"/><path d="M452 349l12 3v26l-6-6-6 2z" fill="#f4f4f4"/><path d="M523 370h20v23h11l-21 26-21-26h11z" fill="#303030" stroke="#f4f4f4" stroke-width="3"/></svg></button>
              <button class="w" aria-label="Load Model"><svg viewBox="618 306 144 144"><path d="M627 345l46 12v60l-46-18zM678 357l49-12v54l-49 18z" fill="#666"/><path d="M631 341l15-4 47 12-18 5zM656 334l17-3 50 12-20 4z" fill="#666"/><path d="M645 349l12 3v26l-6-6-6 2z" fill="#f4f4f4"/><path d="M714 424h21v-22h11l-21-29-21 29h10z" fill="#303030" stroke="#f4f4f4" stroke-width="3"/></svg></button>
            </div>
          </div>
          <div class="scroll"><button aria-label="Scroll up"><svg width="7" height="4" viewBox="0 0 7 4"><path d="M0 4h7L3.5 0z" fill="#444"/></svg></button><div class="track"><div class="thumb"></div></div><button aria-label="Scroll down"><svg width="7" height="4" viewBox="0 0 7 4"><path d="M0 0h7L3.5 4z" fill="#444"/></svg></button></div>
        </div>
        <div class="splitter"></div>
        <div class="help"><p>Select a widget to show its description.</p><p>See <a href="#examples">workflow examples</a>, <a href="#tutorials">YouTube tutorials</a>,<br>or open the <a href="#welcome">welcome screen</a>.</p></div>
        <div class="tools">
          <button class="glyph-i">i</button>
          <button aria-label="Align to grid"><svg width="18" height="18" viewBox="0 0 18 18"><path d="M5.5 0v18M12.5 0v18M0 5.5h18M0 12.5h18" stroke="#fff" stroke-width="1.6"/></svg></button>
          <button class="glyph-t">T<svg class="drop" width="6" height="4" viewBox="0 0 6 4"><path d="M0 0h6L3 4z" fill="#fff"/></svg></button>
          <button aria-label="Arrow"><svg width="16" height="14" viewBox="0 0 16 14"><path d="M1 1l10 8" stroke="#fff" stroke-width="2.6"/><path d="M15 13.5L13 5l-6 7z" fill="#fff"/></svg><svg class="drop" width="6" height="4" viewBox="0 0 6 4"><path d="M0 0h6L3 4z" fill="#fff"/></svg></button>
          <button aria-label="Pause"><svg width="16" height="18" viewBox="0 0 16 18"><path d="M0 0h6v18H0zM9 0h6v18H9z" fill="#fff"/></svg></button>
          <button class="on" aria-label="Help"><svg width="18" height="18" viewBox="0 0 18 18" fill="none" stroke="#fff"><circle cx="9" cy="9" r="8" stroke-width="1.6"/><path d="M6.5 7q0-2.7 2.5-2.7t2.5 2.2Q11.5 8 9 9.5V11" stroke-width="1.7"/><path d="M9 12.2V14" stroke-width="1.8"/></svg></button>
        </div>
      </aside>
      <div class="canvas"><svg class="drag" width="16" height="16"><use href="#code"/></svg></div>
    </div>
  </section>
</main>
</body>
</html>
```
FILE: styles.css
```css
* { box-sizing: border-box; }
body { margin: 0; height: 100vh; display: flex; flex-direction: column; overflow: hidden; background: #3c3b37; font: 14px/24px "Noto Sans", "Open Sans", sans-serif; color: #3c3c3c; }
button { margin: 0; padding: 0; border: 0; background: none; font: inherit; color: inherit; display: flex; align-items: center; justify-content: center; }
svg { display: block; flex: none; }
h1, p { margin: 0; }
.defs { position: absolute; }

.panel { position: relative; z-index: 4; flex: none; height: 24px; padding: 0 8px 0 6px; display: flex; justify-content: space-between; align-items: center; background: linear-gradient(#5e5b50, #3f3e39); color: #dfdbd2; }
.panel-app { font-weight: 700; }
.tray { display: flex; align-items: center; gap: 12px; }
.battery { display: flex; align-items: center; gap: 5px; }
.lang { width: 20px; height: 20px; border-radius: 2px; background: #dfdbd2; color: #45433c; line-height: 20px; text-align: center; font-size: 13px; font-weight: 600; }

.desktop { flex: 1; min-height: 0; display: grid; grid-template-columns: 41px 940fr 939fr; grid-template-rows: minmax(0, 1fr); }

.launcher { position: relative; z-index: 3; padding: 5px 6px; display: flex; flex-direction: column; gap: 6px; border-right: 1px solid #2b2420; background: linear-gradient(rgba(30, 20, 15, .6), transparent 10px), linear-gradient(166deg, #87766f 0, #8b7b74 112px, #44362a 115px, #463326 200px, #4a3725 330px, #483820 470px, #453525 620px, #4a3a2e 800px, #452f24 930px, #452f24 100%); }
.tile { position: relative; flex: none; width: 29px; height: 29px; margin-left: -1px; border-radius: 3px; background: rgba(130, 105, 85, .16); }
.tile > svg { width: 29px; height: 29px; }
.tile.dim > svg { opacity: .8; }
.tile.bare { background: none; }
.tile.faint { background: rgba(130, 105, 85, .1); }
.tile.active { background: linear-gradient(#c06070, #8c2636); }
.tile.lit { background: radial-gradient(#a08c82, #65503f); }
.tile.run::before { content: ""; position: absolute; left: -5px; top: 12px; border: solid transparent; border-width: 3px 0 3px 3px; border-left-color: #8a7c72; }
.tile.active::after { content: ""; position: absolute; right: -6px; top: 12px; border: solid transparent; border-width: 3px 3px 3px 0; border-right-color: #ddd; }
.tile.trash { margin-top: auto; }
.r-badge { width: 24px; height: 24px; border-radius: 12px; background: #514235; color: #7a6c5f; font: 16px/24px "Liberation Serif", serif; }

.files { position: relative; z-index: 2; min-width: 0; display: flex; flex-direction: column; background: #fff; border-radius: 6px 6px 0 0; box-shadow: 0 0 40px rgba(0, 0, 0, .9); }
.titlebar { flex: none; height: 28px; padding-left: 7px; display: flex; align-items: center; gap: 3px; background: linear-gradient(#55524a, #403f3a); border-top: 1px solid #6a675c; border-radius: 6px 6px 0 0; color: #dfdbd2; }
.titlebar h1 { margin-left: 9px; font-size: 14px; line-height: 24px; }
.titlebar.back { border: 0; border-radius: 0; background: #3c3b37; box-shadow: inset 0 7px 6px -4px #111; }
.ctl { width: 16px; height: 16px; border-radius: 8px; background: linear-gradient(#87847a, #68655d); box-shadow: 0 0 0 1px rgba(40, 38, 34, .5); }
.ctl svg { width: 16px; height: 16px; }
.ctl.close { background: linear-gradient(#f3794d, #df4b1c); }
.back .ctl { background: #5d5b53; box-shadow: none; }
.toolbar { flex: none; height: 39px; padding: 2px 7px 3px; display: flex; gap: 8px; background: linear-gradient(#524f46, #3f3e39); color: #d5d1c8; }
.group { display: flex; border: 1px solid #37352f; border-radius: 5px; box-shadow: inset 0 0 0 1px rgba(255, 255, 255, .06); }
.group button { width: 32px; }
.group button + button { border-left: 1px solid #35332e; width: 33px; }
.group.path button { width: auto; padding: 0 8px; }
.group.path .home { padding: 0 8px 0 7px; gap: 6px; }
.group.path .here { padding: 0 10px 0 9px; gap: 11px; }
.group.nav button { width: 32px; }
.spacer { flex: 1; }

.list { width: 100%; table-layout: fixed; border-collapse: collapse; }
.c-size { width: 77px; }
.c-mod { width: 92px; }
.c-star { width: 59px; }
.list th { height: 28px; padding: 0 6px; font-weight: 400; text-align: left; color: #4c4c4c; background: linear-gradient(#fff, #fafafa); border-bottom: 1px solid #d6d6d6; }
.list th + th { border-left: 1px solid #dcdcdc; }
.list td { height: 24px; padding: 0 7px; line-height: 22px; color: #999; }
.list td:first-child { padding: 0 5px; color: #3c3c3c; }
.list .mod { text-align: right; padding-right: 5px; }
.sort { display: flex; align-items: center; justify-content: space-between; padding-right: 3px; }
.file { display: flex; align-items: center; white-space: nowrap; }
.exp { width: 11px; height: 16px; flex: none; }
.ico { width: 16px; height: 16px; margin-right: 5px; }
.st button { width: 16px; height: 16px; margin-left: 15px; color: #333; }
.st svg { width: 16px; height: 16px; }
.list .selected td { background: #f07746; color: #fbddd0; }
.list .selected td:first-child, .list .selected button { color: #fff; }
.status { position: absolute; right: 0; bottom: 0; height: 31px; padding: 0 20px 0 15px; line-height: 28px; border: solid #ccc; border-width: 1px 0 0 1px; border-radius: 4px 0 0 0; background: #fff; color: #4c4c4c; white-space: pre; }

.orange { min-width: 0; display: flex; flex-direction: column; font-family: "DejaVu Sans", sans-serif; }
.work { flex: 1; min-height: 0; display: flex; }
.dock { flex: none; width: 272px; display: flex; flex-direction: column; background: #f1f1f1; border-right: 1px solid #b5b8b8; }
.dock-head { flex: none; height: 17px; display: flex; justify-content: flex-end; padding-right: 4px; background: linear-gradient(#838383, #666); }
.toolbox { flex: 1; min-height: 0; display: flex; border: solid #b2b7b5; border-width: 2px 0; }
.tabs { flex: 1; overflow: hidden; }
.tab { width: 100%; height: 29px; justify-content: flex-start; gap: 10px; font-size: 14px; line-height: 22px; color: #222; }
.tab-ico { width: 37px; height: 100%; display: flex; align-items: center; justify-content: center; }
.tab.data { background: linear-gradient(#f4f4f4, #e4e4e4); }
.tab.data .tab-ico { background: #fbc98a; border-right: 1px solid #b5b5b5; }
.tab.visualize { height: 30px; background: linear-gradient(#ffb5b0 60%, #f2a8a4); color: #000; }
.tab.model { height: 30px; border-top: 1px solid #b5b8b8; background: linear-gradient(#fbc0d8 50%, #e4aec6); color: #000; }
.widgets { display: grid; grid-template-columns: repeat(4, 64px); }
.widgets.first { padding-bottom: 8px; }
.w { height: 84px; padding-top: 2px; flex-direction: column; justify-content: flex-start; font-size: 10px; line-height: 12px; color: #333; }
.w svg { width: 48px; height: 48px; }
.w span { width: 54px; height: 34px; padding-top: 2px; display: flex; align-items: center; text-align: center; justify-content: center; }
.scroll { flex: none; width: 15px; display: flex; flex-direction: column; border-left: 1px solid #b5b8b8; }
.scroll button { flex: none; height: 13px; background: #fafafa; }
.track { flex: 1; border: solid #b5b8b8; border-width: 1px 0; background: #e4e4e4; }
.thumb { height: 40%; background: linear-gradient(90deg, #fff, #f0f0f0); border-bottom: 1px solid #b5b8b8; }
.splitter { flex: none; height: 6px; border-bottom: 2px solid #b2b7b5; }
.help { flex: none; height: 148px; padding: 5px 4px; background: #fff; color: #000; font-size: 12px; line-height: 14px; white-space: nowrap; }
.help p + p { margin-top: 14px; }
.help a { color: #ffa500; }
.tools { flex: none; height: 29px; display: grid; grid-template-columns: repeat(6, 1fr); border-top: 1px solid #a0a0a0; background: linear-gradient(#7e7e7e, #646464); color: #fff; }
.tools button { position: relative; }
.tools button + button { border-left: 1px solid #999; }
.tools .on { background: #ffa840; }
.tools .drop { position: absolute; right: 3px; top: 2px; }
.tools .glyph-i { font: 700 20px/28px "Liberation Mono", monospace; }
.tools .glyph-t { font: 700 26px/28px "DejaVu Serif", serif; }
.canvas { position: relative; flex: 1; background: #fff; }
.drag { position: absolute; left: 172px; top: 172px; }
```
